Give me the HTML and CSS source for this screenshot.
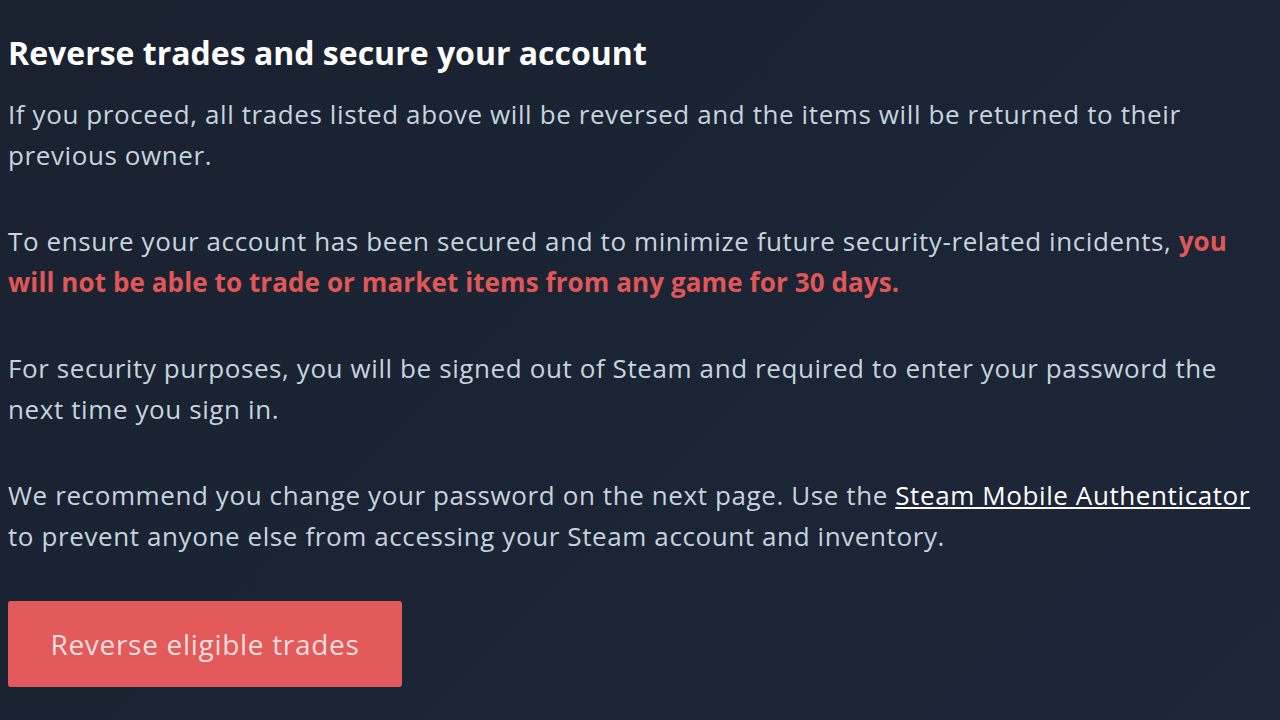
FILE: index.html
```html
<!DOCTYPE html>
<html>
<head>
<meta charset="utf-8">
<link rel="stylesheet" href="styles.css">
</head>
<body>
<div class="panel">
  <h1 class="title">Reverse trades and secure your account</h1>
  <p class="text">If you proceed, all trades listed above will be reversed and the items will be returned to their previous owner.</p>
  <p class="text">To ensure your account has been secured and to minimize future security-related incidents, <span class="warn">you will not be able to trade or market items from any game for 30 days.</span></p>
  <p class="text">For security purposes, you will be signed out of Steam and required to enter your password the next time you sign in.</p>
  <p class="text">We recommend you change your password on the next page. Use the <a class="link" href="#">Steam Mobile Authenticator</a> to prevent anyone else from accessing your Steam account and inventory.</p>
  <button class="btn">Reverse eligible trades</button>
</div>
</body>
</html>
```

FILE: styles.css
```css
html, body {
  margin: 0;
  padding: 0;
  height: 100%;
}
body {
  background: linear-gradient(135deg, #1a2230 0%, #1b2434 50%, #1c2739 100%);
}
.panel {
  padding: 31px 8px 0 8px;
  width: 1264px;
  font-family: "Open Sans", sans-serif;
}
.title {
  margin: 0 0 19px 0;
  font-size: 32px;
  line-height: 44px;
  font-weight: 700;
  color: #ffffff;
}
.text {
  margin: 0 0 45px 0;
  font-size: 26px;
  line-height: 41px;
  letter-spacing: 0.6px;
  color: #c6d4df;
}
.warn {
  color: #e05757;
  font-weight: 700;
  letter-spacing: 0.1px;
}
.link {
  color: #ffffff;
  text-decoration: underline;
}
.btn {
  display: block;
  margin-top: -1px;
  width: 394px;
  height: 86px;
  border: none;
  border-radius: 3px;
  background: #e35a5a;
  color: #fcdede;
  font-family: "Open Sans", sans-serif;
  font-size: 28px;
  letter-spacing: 0.7px;
}
```
